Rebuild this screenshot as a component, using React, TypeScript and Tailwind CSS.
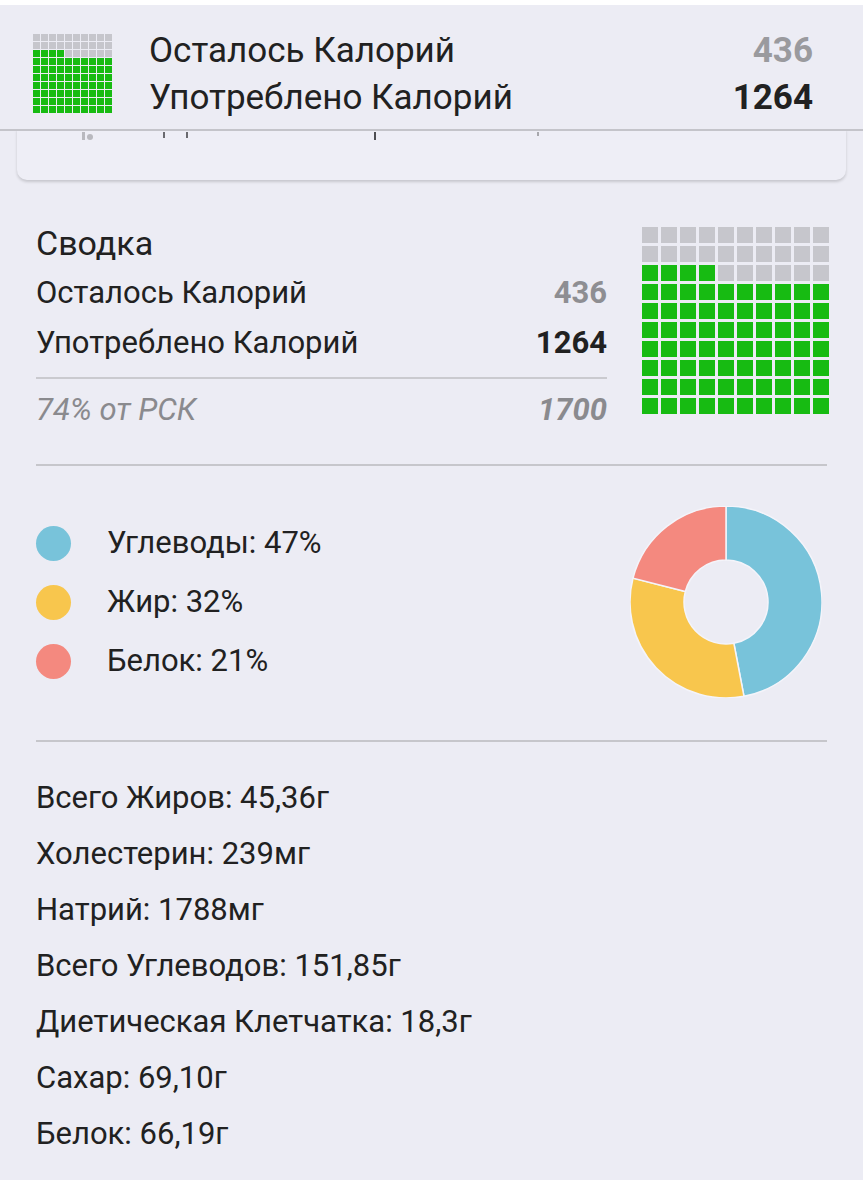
import React from 'react';

const GREEN = 74;

const Waffle = ({ cell, gap }: { cell: string; gap: string }) => {
  const cells = Array.from({ length: 100 }, (_, i) => {
    const r = Math.floor(i / 10);
    const c = i % 10;
    const k = (9 - r) * 10 + c;
    return k < GREEN;
  });
  return (
    <div className={`grid grid-cols-10 ${gap}`}>
      {cells.map((on, i) => (
        <div key={i} className={`${cell} ${on ? 'bg-[#17bb12]' : 'bg-[#c6c6cc]'}`} />
      ))}
    </div>
  );
};

const macros = [
  { label: 'Углеводы: 47%', value: 47, color: '#78c3da', dot: 'bg-[#78c3da]' },
  { label: 'Жир: 32%', value: 32, color: '#f8c64d', dot: 'bg-[#f8c64d]' },
  { label: 'Белок: 21%', value: 21, color: '#f4897f', dot: 'bg-[#f4897f]' },
];

const Donut = () => {
  const R = 96;
  const r = 42;
  const cx = 96;
  const cy = 96;
  let start = 0;
  const pt = (rad: number, frac: number) => {
    const a = frac * Math.PI * 2 - Math.PI / 2;
    return [cx + rad * Math.cos(a), cy + rad * Math.sin(a)];
  };
  return (
    <svg width="192" height="192" viewBox="0 0 192 192">
      {macros.map((m) => {
        const s = start / 100;
        const e = (start + m.value) / 100;
        start += m.value;
        const large = e - s > 0.5 ? 1 : 0;
        const [x1, y1] = pt(R, s);
        const [x2, y2] = pt(R, e);
        const [x3, y3] = pt(r, e);
        const [x4, y4] = pt(r, s);
        const d = `M${x1} ${y1} A${R} ${R} 0 ${large} 1 ${x2} ${y2} L${x3} ${y3} A${r} ${r} 0 ${large} 0 ${x4} ${y4} Z`;
        return <path key={m.label} d={d} fill={m.color} stroke="#f4f4fa" strokeWidth="1.5" />;
      })}
    </svg>
  );
};

const nutrients = [
  'Всего Жиров: 45,36г',
  'Холестерин: 239мг',
  'Натрий: 1788мг',
  'Всего Углеводов: 151,85г',
  'Диетическая Клетчатка: 18,3г',
  'Сахар: 69,10г',
  'Белок: 66,19г',
];

export default function App() {
  return (
    <div className="min-h-screen bg-[#ececf4] font-['Roboto',sans-serif] text-[#212121]">
      <div className="h-[5px] bg-white" />

      <div className="relative z-10 flex h-[126px] border-b-2 border-[#c4c4ca] bg-[#ececf4] pl-[33px] pr-[50px] pt-[23px]">
        <div className="mt-[6px]">
          <Waffle cell="w-[7px] h-[7px]" gap="gap-px" />
        </div>
        <div className="ml-[37px] flex-1 text-[35px]">
          <div className="flex h-[47px] items-center justify-between">
            <span>Осталось Калорий</span>
            <span className="font-bold text-[#9a9a9e]">436</span>
          </div>
          <div className="flex h-[47px] items-center justify-between">
            <span>Употреблено Калорий</span>
            <span className="font-bold">1264</span>
          </div>
        </div>
      </div>

      {/* card peeking out under header */}
      <div className="mx-[17px] -mt-[2px] h-[51px] rounded-b-[10px] bg-[#eeeef6] shadow-[0_2px_3px_rgba(0,0,0,0.16)]">
        <div className="flex items-start pl-[65px] pt-[3px]">
          <div className="flex items-start gap-[2px]">
            <div className="h-[8px] w-[3px] bg-[#b9b9bf]" />
            <div className="mt-[2px] h-[6px] w-[6px] rounded-full bg-[#b9b9bf]" />
          </div>
          <div className="ml-[70px] h-[6px] w-[2px] bg-[#6a6a6f]" />
          <div className="ml-[21px] h-[6px] w-[2px] bg-[#6a6a6f]" />
          <div className="ml-[186px] h-[8px] w-[2px] bg-[#4e4e52]" />
          <div className="ml-[161px] h-[4px] w-[2px] bg-[#a8a8ad]" />
        </div>
      </div>

      {/* summary */}
      <div className="flex items-start pl-[36px] pr-[34px] pt-[38px]">
        <div className="flex-1">
          <div className="flex h-[50px] items-center text-[34px]">Сводка</div>
          <div className="flex h-[50px] items-center justify-between text-[31px]">
            <span>Осталось Калорий</span>
            <span className="font-bold text-[#8e8e92]">436</span>
          </div>
          <div className="flex h-[51px] items-center justify-between text-[31px]">
            <span>Употреблено Калорий</span>
            <span className="font-bold">1264</span>
          </div>
          <div className="mt-[8px] h-[2px] bg-[#cacacf]" />
          <div className="flex h-[62px] items-center justify-between text-[31px] italic text-[#8a8a8e]">
            <span>74% от РСК</span>
            <span className="font-bold">1700</span>
          </div>
        </div>
        <div className="ml-[35px] mt-[9px]">
          <Waffle cell="w-[16px] h-[16px]" gap="gap-[3px]" />
        </div>
      </div>

      <div className="mx-[36px] mt-[23px] h-[2px] bg-[#c6c6cb]" />

      {/* macros */}
      <div className="flex items-center pl-[36px] pr-[41px] pt-[40px]">
        <div className="flex-1">
          {macros.map((m) => (
            <div key={m.label} className="flex h-[59px] items-center">
              <div className={`h-[35px] w-[35px] rounded-full ${m.dot}`} />
              <span className="ml-[36px] text-[31px]">{m.label}</span>
            </div>
          ))}
        </div>
        <Donut />
      </div>

      <div className="mx-[36px] mt-[42px] h-[2px] bg-[#c6c6cb]" />

      {/* nutrient list */}
      <div className="pl-[36px] pt-[28px]">
        {nutrients.map((n) => (
          <div key={n} className="flex h-[56px] items-center text-[31px]">
            {n}
          </div>
        ))}
      </div>
    </div>
  );
}
